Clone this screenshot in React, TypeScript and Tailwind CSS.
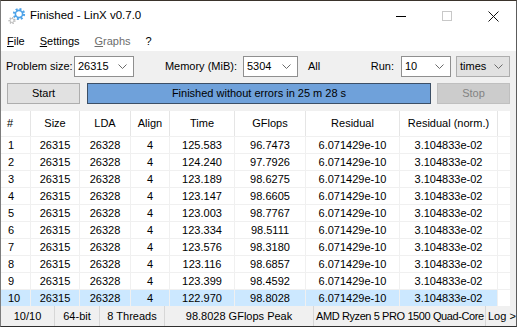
import { Fragment } from 'react'

const rows = [
  ['1', '125.583', '96.7473'],
  ['2', '124.240', '97.7926'],
  ['3', '123.189', '98.6275'],
  ['4', '123.147', '98.6605'],
  ['5', '123.003', '98.7767'],
  ['6', '123.334', '98.5111'],
  ['7', '123.576', '98.3180'],
  ['8', '123.116', '98.6857'],
  ['9', '123.399', '98.4592'],
  ['10', '122.970', '98.8028'],
]

const headers = ['#', 'Size', 'LDA', 'Align', 'Time', 'GFlops', 'Residual', 'Residual (norm.)', '']

function Chevron() {
  return (
    <svg width="9" height="5" viewBox="0 0 9 5" className="shrink-0">
      <polyline points="0.5,0.5 4.5,4.5 8.5,0.5" fill="none" stroke="#6a6a6a" strokeWidth="1" />
    </svg>
  )
}

function Combo({ value, width, flat = false }: { value: string; width: string; flat?: boolean }) {
  return (
    <div
      className={`flex h-[21px] items-center justify-between pl-[3px] pr-[6px] border ${width} ${
        flat ? 'bg-[#e1e1e1] border-[#adadad]' : 'bg-white border-[#8f8f8f]'
      }`}
    >
      <span>{value}</span>
      <Chevron />
    </div>
  )
}

// little two-gear app icon
function GearIcon() {
  return (
    <svg width="20" height="20" viewBox="0 0 20 20">
      <circle cx="12" cy="8" r="4.6" fill="none" stroke="#4ea3e8" strokeWidth="3" strokeDasharray="1.8 1.8" />
      <circle cx="12" cy="8" r="3.6" fill="none" stroke="#4ea3e8" strokeWidth="1.6" />
      <circle cx="5" cy="14.5" r="2.6" fill="none" stroke="#b9b9b9" strokeWidth="2" strokeDasharray="1.2 1.2" />
      <circle cx="5" cy="14.5" r="2" fill="none" stroke="#c4c4c4" strokeWidth="1" />
    </svg>
  )
}

export default function App() {
  return (
    <div className="w-[517px] h-[327px] overflow-hidden flex flex-col bg-white border-t border-b border-l border-r border-t-[#3a332b] border-b-[#2f2f2f] border-l-[#7c7c7c] border-r-[#5c5c5c] font-['Liberation_Sans',Arial,sans-serif] text-[11px] text-black leading-none">
      {/* title bar */}
      <div className="h-[30px] flex items-center shrink-0">
        <div className="ml-[6px] w-[22px] flex items-center">
          <GearIcon />
        </div>
        <span className="ml-[1px] text-[11.5px]">Finished - LinX v0.7.0</span>
        <div className="ml-auto flex h-full">
          <div className="w-[46px] flex items-center justify-center">
            <div className="w-[10px] h-px bg-black" />
          </div>
          <div className="w-[46px] flex items-center justify-center">
            <div className="w-[10px] h-[10px] border border-[#c8c8c8]" />
          </div>
          <div className="w-[46px] flex items-center justify-center">
            <svg width="11" height="11" viewBox="0 0 11 11">
              <path d="M0.5 0.5 L10.5 10.5 M10.5 0.5 L0.5 10.5" stroke="#111" strokeWidth="1" />
            </svg>
          </div>
        </div>
      </div>

      {/* menu bar */}
      <div className="h-[20px] flex items-center gap-[15px] pl-[6px] shrink-0">
        <span><u>F</u>ile</span>
        <span><u>S</u>ettings</span>
        <span className="text-[#6d6d6d]"><u>G</u>raphs</span>
        <span>?</span>
      </div>

      {/* controls */}
      <div className="bg-[#f0f0f0] flex-1 flex flex-col">
        <div className="flex items-center mt-[5px] h-[21px]">
          <span className="w-[73px] pl-[5px]">Problem size:</span>
          <Combo value="26315" width="w-[60px]" />
          <span className="w-[109px] text-right pr-[6px]">Memory (MiB):</span>
          <Combo value="5304" width="w-[55px]" />
          <span className="ml-[10px]">All</span>
          <span className="ml-auto pr-[7px]">Run:</span>
          <Combo value="10" width="w-[50px]" />
          <div className="ml-[5px] mr-[6px]">
            <Combo value="times" width="w-[54px]" flat />
          </div>
        </div>

        <div className="flex items-center mt-[6px] h-[21px]">
          <div className="ml-[6px] w-[73px] h-full flex items-center justify-center bg-[#e1e1e1] border border-[#adadad]">
            Start
          </div>
          <div className="ml-[7px] flex-1 h-full flex items-center justify-center bg-[#6fa1da] border border-[#3c4f66]">
            Finished without errors in 25 m 28 s
          </div>
          <div className="ml-[6px] mr-[6px] w-[73px] h-full flex items-center justify-center bg-[#cccccc] border border-[#bfbfbf] text-[#838383]">
            Stop
          </div>
        </div>

        {/* results table */}
        <div className="mt-[7px] mr-[6px] bg-white grid grid-cols-[30px_49px_51px_39px_65px_71px_94px_98px_1fr] grid-rows-[25px_repeat(10,17px)]">
          {headers.map((h, i) => (
            <div
              key={h + i}
              className={`flex items-center ${i === 0 ? 'pl-[6px]' : 'justify-center'} ${
                i < 8 ? 'border-r border-[#e5e5e5]' : ''
              }`}
            >
              {h}
            </div>
          ))}
          {rows.map(([n, time, gf]) => {
            const sel = n === '10'
            const cell = `flex items-center border-t border-r border-[#f0f0f0] ${sel ? 'bg-[#cce8ff]' : ''}`
            return (
              <Fragment key={n}>
                <div className={`${cell} pl-[7px]`}>{n}</div>
                <div className={`${cell} justify-center`}>26315</div>
                <div className={`${cell} justify-center`}>26328</div>
                <div className={`${cell} justify-center`}>4</div>
                <div className={`${cell} justify-center`}>{time}</div>
                <div className={`${cell} justify-center`}>{gf}</div>
                <div className={`${cell} justify-center`}>6.071429e-10</div>
                <div className={`${cell} justify-center`}>3.104833e-02</div>
                <div className="border-t border-[#f0f0f0]" />
              </Fragment>
            )
          })}
        </div>
      </div>

      {/* status bar */}
      <div className="h-[20px] shrink-0 flex items-center bg-[#f0f0f0] whitespace-nowrap overflow-hidden">
        <div className="w-[54px] h-full flex items-center justify-center border-r border-[#d7d7d7]">10/10</div>
        <div className="w-[45px] h-full flex items-center justify-center border-r border-[#d7d7d7]">64-bit</div>
        <div className="w-[65px] h-full flex items-center justify-center border-r border-[#d7d7d7]">8 Threads</div>
        <div className="w-[149px] h-full flex items-center justify-center border-r border-[#d7d7d7]">98.8028 GFlops Peak</div>
        <div className="w-[172px] h-full flex items-center pl-[2px] border-r border-[#d7d7d7] tracking-[-0.4px]">
          AMD Ryzen 5 PRO 1500 Quad-Core
        </div>
        <div className="pl-[2px] h-full flex items-center">Log &gt;</div>
      </div>
    </div>
  )
}
